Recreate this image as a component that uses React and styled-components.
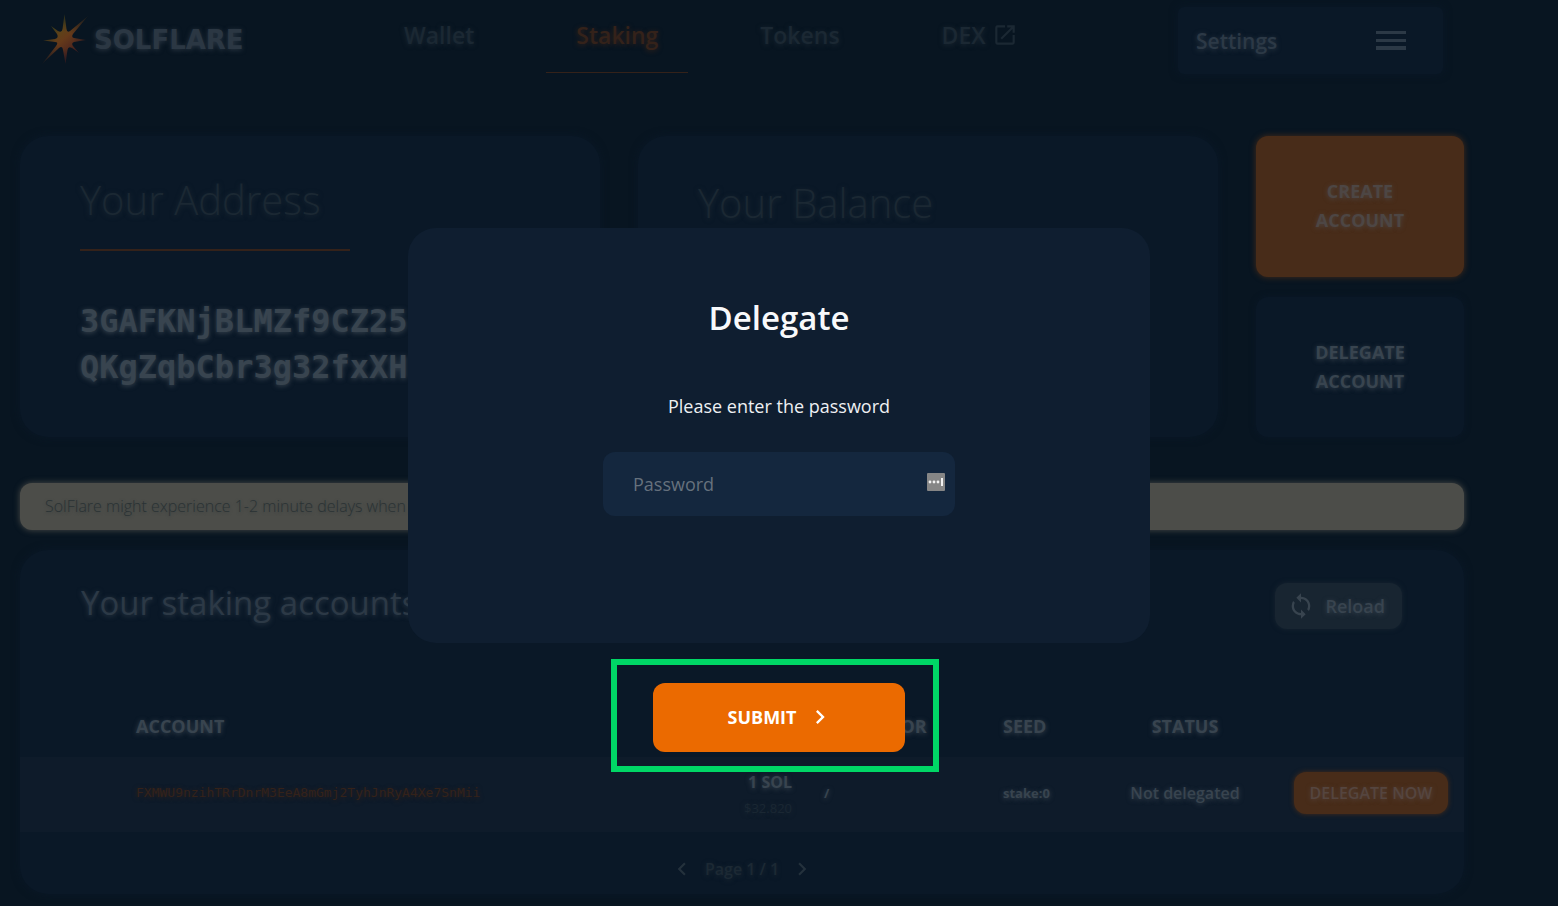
import React from "react";
import styled, { createGlobalStyle, css } from "styled-components";
import { MdOpenInNew, MdSync, MdChevronLeft, MdChevronRight } from "react-icons/md";

const color = {
  page: "#081521",
  card: "#0a1827",
  row: "#0e1b2a",
  faint: "#1b2833",
  muted: "#2c3946",
  text: "#38444f",
  orangeDim: "#34221a",
  orangeCard: "#482c19",
  modal: "#0f1e30",
  input: "#14273e",
  orange: "#eb6a00",
  green: "#00d766",
};

const GlobalStyle = createGlobalStyle`
  *, *::before, *::after { box-sizing: border-box; }
  body {
    margin: 0;
    background: ${color.page};
    color: ${color.text};
    font-family: "Open Sans", "Noto Sans", sans-serif;
  }
  button, input { font-family: inherit; }
  button { border: 0; padding: 0; cursor: pointer; }
  h1, h2, p { margin: 0; }
`;

const glow = css`
  text-shadow: 0 1px 5px currentColor;
`;

const Page = styled.div`
  min-height: 100vh;
  padding-bottom: 12px;
  overflow: hidden;
`;

const Header = styled.header`
  display: flex;
  justify-content: space-between;
  align-items: flex-start;
  padding: 7px 115px 0 40px;
`;

const Logo = styled.a`
  display: flex;
  align-items: center;
  gap: 4px;
  height: 66px;
  color: #2b3743;
  font: 700 26px "DejaVu Sans", sans-serif;
  text-decoration: none;
  ${glow}
`;

const Nav = styled.nav`
  display: flex;
  gap: 42px;
`;

const NavLink = styled.a`
  display: flex;
  align-items: center;
  gap: 6px;
  height: 66px;
  padding: 0 30px 10px;
  border-bottom: 1px solid ${(p) => (p.$active ? color.orangeDim : "transparent")};
  color: ${(p) => (p.$active ? color.orangeDim : color.faint)};
  font-size: 23px;
  font-weight: 600;
  text-decoration: none;
  ${glow}
`;

const SettingsButton = styled.button`
  display: flex;
  align-items: center;
  justify-content: space-between;
  width: 265px;
  height: 67px;
  padding: 0 37px 0 18px;
  border-radius: 6px;
  background: ${color.card};
  box-shadow: 0 0 8px ${color.card};
  color: ${color.muted};
  font-size: 21px;
  font-weight: 600;
  ${glow}
`;

const Content = styled.main`
  display: flex;
  flex-direction: column;
  padding: 62px 94px 0 20px;
`;

const Summary = styled.div`
  display: grid;
  grid-template-columns: minmax(0, 1fr) minmax(0, 1fr) 208px;
  gap: 38px;
`;

const Card = styled.section`
  border-radius: 28px;
  background: ${color.card};
  box-shadow: 0 0 8px ${color.card};
`;

const SummaryCard = styled(Card)`
  min-height: 301px;
  padding: ${(p) => (p.$low ? "38px" : "35px")} 60px 20px;
`;

const CardTitle = styled.h2`
  width: 270px;
  padding-bottom: 20px;
  border-bottom: 2px solid ${(p) => (p.$underlined ? color.orangeDim : "transparent")};
  color: ${color.faint};
  font-size: 40px;
  font-weight: 300;
  line-height: 58px;
  white-space: nowrap;
  ${glow}
`;

const Address = styled.p`
  margin-top: 47px;
  font: 700 32px/46px "DejaVu Sans Mono", monospace;
  ${glow}
`;

const Actions = styled.div`
  display: grid;
  grid-template-rows: 1fr 1fr;
  gap: 20px;
`;

const ActionButton = styled.button`
  padding: 0 48px;
  border-radius: 12px;
  background: ${(p) => (p.$primary ? color.orangeCard : color.card)};
  box-shadow: 0 0 6px ${(p) => (p.$primary ? color.orangeCard : color.card)};
  color: ${(p) => (p.$primary ? "#4d4644" : color.text)};
  font-size: 18px;
  font-weight: 700;
  line-height: 29px;
  ${glow}
`;

const Notice = styled.p`
  margin-top: 46px;
  padding: 0 25px;
  border-radius: 12px;
  background: #4c4d49;
  box-shadow: 0 0 6px #4c4d49;
  color: #2a3234;
  font-size: 16px;
  font-weight: 300;
  line-height: 47px;
  text-shadow: 0 1px 3px #3a4040;
`;

const StakingCard = styled(Card)`
  margin-top: 20px;
`;

const StakingHeader = styled.div`
  display: flex;
  align-items: flex-end;
  justify-content: space-between;
  padding: 27px 62px 0 61px;
`;

const StakingTitle = styled.h2`
  color: ${color.muted};
  font-size: 33px;
  font-weight: 400;
  line-height: 52px;
  ${glow}
`;

const ReloadButton = styled.button`
  display: flex;
  align-items: center;
  gap: 10px;
  height: 46px;
  padding: 0 17px 0 12px;
  border-radius: 12px;
  background: #182531;
  box-shadow: 0 0 5px #182531;
  color: ${color.text};
  font-size: 18px;
  font-weight: 600;
  ${glow}
`;

const Table = styled.table`
  width: 100%;
  margin-top: 66px;
  border-collapse: collapse;
  table-layout: fixed;
`;

const HeadCell = styled.th`
  width: ${(p) => p.$width || "auto"};
  height: 62px;
  padding: 0 16px ${(p) => (p.$first ? "0 116px" : "0 16px")};
  font-size: 18px;
  font-weight: 700;
  text-align: ${(p) => p.$align || "left"};
  ${glow}
`;

const Row = styled.tr`
  background: ${color.row};
`;

const Cell = styled.td`
  height: 75px;
  padding: 0 16px 4px ${(p) => (p.$first ? "116px" : "16px")};
  font-size: ${(p) => (p.$small ? "13px" : "16px")};
  font-weight: ${(p) => (p.$small ? 700 : 600)};
  text-align: ${(p) => p.$align || "left"};
  white-space: nowrap;
  ${glow}
`;

const AccountLink = styled.a`
  display: block;
  color: ${color.orangeDim};
  font: 400 13px "DejaVu Sans Mono", monospace;
  text-decoration: none;
`;

const Amount = styled.div`
  padding-top: 4px;
  font-weight: 700;
  line-height: 26px;
`;

const Fiat = styled.div`
  color: #1a2733;
  font-size: 13px;
  font-weight: 400;
  line-height: 26px;
`;

const DelegateButton = styled.button`
  width: 154px;
  height: 42px;
  border-radius: 12px;
  background: ${color.orangeCard};
  box-shadow: 0 0 5px ${color.orangeCard};
  color: #55453f;
  font-size: 16px;
  font-weight: 600;
  ${glow}
`;

const Pager = styled.div`
  display: flex;
  align-items: center;
  justify-content: center;
  gap: 10px;
  height: 50px;
  padding: 0;
  margin-top: 12px;
  color: #1c2934;
  font-size: 16px;
  font-weight: 600;
  ${glow}
`;

const PageButton = styled.button`
  display: flex;
  background: none;
  color: #24313c;
`;

const Overlay = styled.div`
  position: fixed;
  inset: 0;
  display: flex;
  flex-direction: column;
  align-items: center;
  padding-top: 228px;
`;

const DialogForm = styled.form`
  display: flex;
  flex-direction: column;
  align-items: center;
  width: 100%;
`;

const Dialog = styled.div`
  display: flex;
  flex-direction: column;
  align-items: center;
  width: 742px;
  max-width: 100%;
  min-height: 415px;
  padding-top: 66px;
  border-radius: 28px;
  background: ${color.modal};
`;

const DialogTitle = styled.h1`
  color: #f8f9fb;
  font-size: 33px;
  font-weight: 600;
  line-height: 48px;
`;

const DialogLabel = styled.label`
  margin-top: 50px;
  color: #eef0f3;
  font-size: 18px;
  font-weight: 500;
  line-height: 28px;
`;

const PasswordField = styled.div`
  display: flex;
  align-items: center;
  width: 352px;
  height: 64px;
  margin-top: 32px;
  padding: 0 10px 0 30px;
  border-radius: 12px;
  background: ${color.input};
`;

const PasswordInput = styled.input`
  flex: 1;
  min-width: 0;
  padding: 0;
  border: 0;
  outline: 0;
  background: none;
  color: #fff;
  font-size: 18px;
  font-weight: 500;

  &::placeholder {
    color: #66717d;
    opacity: 1;
  }
`;

const Highlight = styled.div`
  margin: 16px 8px 0 0;
  padding: 18px 28px 14px 36px;
  border: 6px solid ${color.green};
`;

const SubmitButton = styled.button`
  display: flex;
  align-items: center;
  justify-content: center;
  gap: 10px;
  width: 252px;
  height: 69px;
  padding: 0 0 2px 4px;
  border-radius: 12px;
  background: ${color.orange};
  color: #fff;
  font-size: 18px;
  font-weight: 700;
`;

function FlareMark() {
  return (
    <svg width="50" height="54" viewBox="0 0 50 54" aria-hidden="true">
      <defs>
        <radialGradient id="flare-fade" gradientUnits="userSpaceOnUse" cx="25" cy="27" r="30">
          <stop offset="0.3" stopColor="#fff" />
          <stop offset="1" stopColor="#fff" stopOpacity="0.25" />
        </radialGradient>
        <mask id="flare-mask">
          <rect width="50" height="54" fill="url(#flare-fade)" />
        </mask>
        <linearGradient id="flare" x1="0.25" y1="0.2" x2="0.7" y2="0.8">
          <stop offset="0" stopColor="#544d17" />
          <stop offset="0.5" stopColor="#653a1a" />
          <stop offset="1" stopColor="#451f20" />
        </linearGradient>
      </defs>
      <path
        fill="url(#flare)"
        mask="url(#flare-mask)"
        d="M24.500 1L26.500 16Q27 20 30 18L48 3L33 21Q31 24 34 25L46 27L34 29Q31 30 33 33L39 40L32 35Q28 33 27.500 37L25.500 51L23 37Q22.500 32 19 35L2 51L16 33Q19 29 15 29L3 27.500L15 26Q19 25 17 21L11 13L18 18Q22 20 22.500 16Z"
      />
    </svg>
  );
}

function MenuIcon() {
  return (
    <svg width="30" height="20" viewBox="0 0 30 20" fill="currentColor" aria-hidden="true">
      <rect y="0" width="30" height="3" />
      <rect y="8" width="30" height="3" />
      <rect y="15" width="30" height="4" />
    </svg>
  );
}

function PasswordManagerIcon() {
  return (
    <svg width="18" height="22" viewBox="0 0 18 22" aria-hidden="true">
      <rect width="18" height="18" rx="1" fill="#868686" />
      <g fill="#f2f2f2">
        <circle cx="3" cy="9" r="1.400" />
        <circle cx="7" cy="9" r="1.400" />
        <circle cx="11" cy="9" r="1.400" />
        <rect x="14" y="5" width="2" height="8" />
      </g>
    </svg>
  );
}

export default function App() {
  return (
    <>
      <GlobalStyle />
      <Page>
        <Header>
          <Logo href="#home">
            <FlareMark />
            SOLFLARE
          </Logo>
          <Nav>
            <NavLink href="#wallet">Wallet</NavLink>
            <NavLink href="#staking" $active aria-current="page">Staking</NavLink>
            <NavLink href="#tokens">Tokens</NavLink>
            <NavLink href="#dex">
              DEX <MdOpenInNew size={26} />
            </NavLink>
          </Nav>
          <SettingsButton type="button">
            Settings
            <MenuIcon />
          </SettingsButton>
        </Header>

        <Content>
          <Summary>
            <SummaryCard>
              <CardTitle $underlined>Your Address</CardTitle>
              <Address>
                3GAFKNjBLMZf9CZ25
                <br />
                QKgZqbCbr3g32fxXH
              </Address>
            </SummaryCard>
            <SummaryCard $low>
              <CardTitle>Your Balance</CardTitle>
            </SummaryCard>
            <Actions>
              <ActionButton type="button" $primary>CREATE ACCOUNT</ActionButton>
              <ActionButton type="button">DELEGATE ACCOUNT</ActionButton>
            </Actions>
          </Summary>

          <Notice>SolFlare might experience 1-2 minute delays when</Notice>

          <StakingCard>
            <StakingHeader>
              <StakingTitle>Your staking accounts</StakingTitle>
              <ReloadButton type="button">
                <MdSync size={28} />
                Reload
              </ReloadButton>
            </StakingHeader>
            <Table>
              <thead>
                <tr>
                  <HeadCell $first>ACCOUNT</HeadCell>
                  <HeadCell $width="208px" aria-label="Balance" />
                  <HeadCell $width="179px">VALIDATOR</HeadCell>
                  <HeadCell $width="119px">SEED</HeadCell>
                  <HeadCell $width="158px" $align="center">STATUS</HeadCell>
                  <HeadCell $width="200px" aria-label="Actions" />
                </tr>
              </thead>
              <tbody>
                <Row>
                  <Cell $first>
                    <AccountLink href="#account">FXMWU9nzihTRrDnrM3EeA8mGmj2TyhJnRyA4Xe7SnMii</AccountLink>
                  </Cell>
                  <Cell $align="right">
                    <Amount>1 SOL</Amount>
                    <Fiat>$32.820</Fiat>
                  </Cell>
                  <Cell $small>/</Cell>
                  <Cell $small>stake:0</Cell>
                  <Cell $align="center">Not delegated</Cell>
                  <Cell $align="right">
                    <DelegateButton type="button">DELEGATE NOW</DelegateButton>
                  </Cell>
                </Row>
              </tbody>
            </Table>
            <Pager>
              <PageButton type="button" aria-label="Previous page">
                <MdChevronLeft size={26} />
              </PageButton>
              Page 1 / 1
              <PageButton type="button" aria-label="Next page">
                <MdChevronRight size={26} />
              </PageButton>
            </Pager>
          </StakingCard>
        </Content>
      </Page>

      <Overlay role="dialog" aria-modal="true" aria-labelledby="dialog-title">
        <DialogForm onSubmit={(e) => e.preventDefault()}>
          <Dialog>
            <DialogTitle id="dialog-title">Delegate</DialogTitle>
            <DialogLabel htmlFor="password">Please enter the password</DialogLabel>
            <PasswordField>
              <PasswordInput id="password" type="password" placeholder="Password" />
              <PasswordManagerIcon />
            </PasswordField>
          </Dialog>
          <Highlight>
            <SubmitButton type="submit">
              SUBMIT
              <MdChevronRight size={28} />
            </SubmitButton>
          </Highlight>
        </DialogForm>
      </Overlay>
    </>
  );
}
